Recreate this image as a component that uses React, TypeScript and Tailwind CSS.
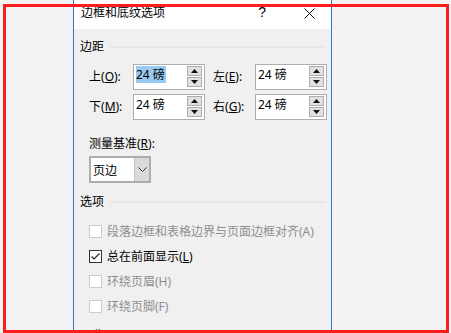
import React from "react";

const FONT = { fontFamily: '"Noto Sans", "Noto Sans CJK SC", sans-serif' };

function Spinner() {
  return (
    <div className="ml-auto mr-[2px] mt-[1px] flex flex-col gap-[1px]">
      <div className="w-[15px] h-[10px] border border-[#adadad] bg-[#e1e1e1] flex items-center justify-center">
        <svg width="7" height="4" viewBox="0 0 7 4"><polygon points="3.5,0 7,4 0,4" fill="#111" /></svg>
      </div>
      <div className="w-[15px] h-[10px] border border-[#adadad] bg-[#e1e1e1] flex items-center justify-center">
        <svg width="7" height="4" viewBox="0 0 7 4"><polygon points="0,0 7,0 3.5,4" fill="#111" /></svg>
      </div>
    </div>
  );
}

function NumInput({ selected }: { selected?: boolean }) {
  return (
    <div className="w-[72px] h-[26px] border border-[#adadad] bg-white flex items-start">
      <span
        className={
          "ml-[2px] mt-[1px] h-[17px] leading-[17px] text-[12px] text-black pr-[1px] " +
          (selected ? "bg-[#99c9ef]" : "")
        }
      >
        24 磅
      </span>
      <Spinner />
    </div>
  );
}

function Label({ w, ch, k }: { w: string; ch: string; k: string }) {
  return (
    <div className={w + " text-[12px] leading-[16px] text-black"}>
      {ch}(<span className="underline">{k}</span>):
    </div>
  );
}

function Heading({ text }: { text: string }) {
  return (
    <div className="flex items-center h-[16px]">
      <span className="text-[12px] leading-[16px] text-black">{text}</span>
      <div className="flex-1 h-px bg-[#dcdcdc] ml-[6px] mr-[5px] -translate-y-[0.5px]" />
    </div>
  );
}

function Check({ checked, disabled, children }: { checked?: boolean; disabled?: boolean; children: React.ReactNode }) {
  return (
    <div className="h-[25px] flex items-center pl-[9px]">
      <div
        className={
          "w-[13px] h-[13px] border bg-white flex items-center justify-center " +
          (disabled ? "border-[#cccccc]" : "border-[#333333]")
        }
      >
        {checked && (
          <svg width="11" height="11" viewBox="0 0 11 11">
            <polyline points="1.5,5.5 4,8 9.5,2.5" fill="none" stroke="#222" strokeWidth="1.2" />
          </svg>
        )}
      </div>
      <span className={"ml-[5px] text-[12px] leading-[16px] " + (disabled ? "text-[#8e8e8e]" : "text-black")}>
        {children}
      </span>
    </div>
  );
}

export default function App() {
  return (
    <div className="relative w-[451px] h-[333px] overflow-hidden bg-[#f3f3f3]" style={FONT}>
      <div className="flex h-full">
        <div className="w-[73px] shrink-0" />
        <div className="w-[259px] shrink-0 h-[400px] border-l border-r border-[#2b78cf] bg-[#f0f0f0] flex flex-col">
          {/* title bar */}
          <div className="h-[29px] bg-white flex items-start">
            <span className="ml-[7px] mt-[5px] text-[12px] leading-[16px] text-black">边框和底纹选项</span>
            <span className="ml-auto mt-[4px] text-[14px] leading-[16px] text-black" style={{ fontFamily: '"Liberation Sans", sans-serif' }}>?</span>
            <svg className="ml-[38px] mr-[16px] mt-[8px]" width="11" height="11" viewBox="0 0 11 11">
              <line x1="0.5" y1="0.5" x2="10.5" y2="10.5" stroke="#111" strokeWidth="1" />
              <line x1="10.5" y1="0.5" x2="0.5" y2="10.5" stroke="#111" strokeWidth="1" />
            </svg>
          </div>
          {/* body */}
          <div className="pl-[6px] flex flex-col">
            <div className="mt-[10px]">
              <Heading text="边距" />
            </div>
            <div className="mt-[9px] pl-[9px] flex flex-col gap-[4px]">
              <div className="flex items-center">
                <Label w="w-[44px]" ch="上" k="O" />
                <NumInput selected />
                <div className="w-[8px]" />
                <Label w="w-[42px]" ch="左" k="E" />
                <NumInput />
              </div>
              <div className="flex items-center">
                <Label w="w-[44px]" ch="下" k="M" />
                <NumInput />
                <div className="w-[8px]" />
                <Label w="w-[42px]" ch="右" k="G" />
                <NumInput />
              </div>
            </div>
            <div className="mt-[16px] pl-[9px] text-[12px] leading-[16px] text-black">
              测量基准(<span className="underline">R</span>):
            </div>
            <div className="mt-[4px] ml-[9px] w-[62px] h-[27px] border-2 border-[#adadad] bg-white flex">
              <span className="ml-[2px] mt-[5px] text-[12px] leading-[16px] text-black">页边</span>
              <div className="ml-auto w-[15px] h-full bg-[#dadada] border-l border-[#c4c4c4] flex items-center justify-center">
                <svg width="9" height="5" viewBox="0 0 9 5">
                  <polyline points="0.5,0.5 4.5,4.5 8.5,0.5" fill="none" stroke="#333" strokeWidth="1" />
                </svg>
              </div>
            </div>
            <div className="mt-[11px]">
              <Heading text="选项" />
            </div>
            <div className="mt-[9px] flex flex-col">
              <Check disabled>段落边框和表格边界与页面边框对齐(A)</Check>
              <Check checked>
                总在前面显示(<span className="underline">L</span>)
              </Check>
              <Check disabled>环绕页眉(H)</Check>
              <Check disabled>环绕页脚(F)</Check>
            </div>
            <div className="mt-[9px]">
              <Heading text="预览" />
            </div>
          </div>
        </div>
      </div>
      <div className="absolute left-[3px] top-[4px] w-[446px] h-[329px] border-[3px] border-[#fd1d1d] pointer-events-none" />
    </div>
  );
}
